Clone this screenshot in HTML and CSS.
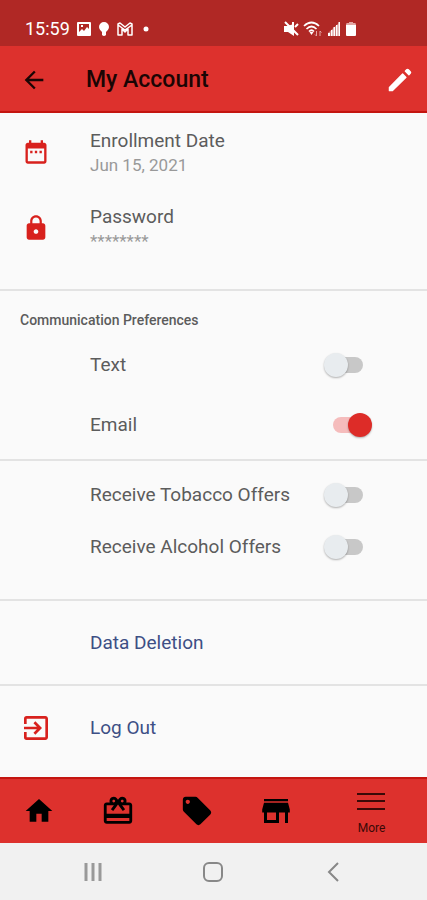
FILE: index.html
```html
<!DOCTYPE html>
<html lang="en">
<head>
    <meta charset="UTF-8">
    <meta name="viewport" content="width=device-width, initial-scale=1.0">
    <title>My Account</title>
    <link rel="stylesheet" href="styles.css">
</head>
<body>
    <div class="status-bar">
        <div class="status-left">
            <span class="time">15:59</span>
            <svg width="16" height="16" viewBox="0 0 16 16"><path fill="#fff" fill-rule="evenodd" d="M2 1h12q1 0 1 1v12q0 1-1 1H2q-1 0-1-1V2q0-1 1-1zm1 2v8l3-3 2 2 3-4 2 2V3zm2 1h2v2H5z"/></svg>
            <svg width="12" height="16" viewBox="0 0 12 16"><path fill="#fff" d="M6 1a5 5 0 0 1 5 5c0 2-2 4-3 5v3q-2 2-4 0v-3C3 10 1 8 1 6a5 5 0 0 1 5-5z"/></svg>
            <svg width="18" height="16" viewBox="0 0 18 16"><path fill="none" stroke="#fff" stroke-width="1.5" stroke-linejoin="round" d="M2 14V3l2-1 5 4 5-4 2 1v11h-4V8l-3 3-3-3v6zM2 4l7 5 7-5"/></svg>
            <svg width="12" height="16" viewBox="0 0 12 16"><circle cx="6" cy="8" r="2.5" fill="#fff"/></svg>
        </div>
        <div class="status-right">
            <svg width="16" height="16" viewBox="0 0 16 16"><path fill="#fff" d="M1 5h3l7-2v12l-6-4H1z"/><path stroke="#fff" stroke-width="2" d="M2 1l13 13M10 5V1M12 6l3-3"/></svg>
            <svg width="20" height="16" viewBox="0 0 20 16"><path fill="none" stroke="#fff" stroke-width="1.7" d="M1 5q7.500-7 15 0M3.500 8q5-5 10 0M6 10.500q2.500-2.500 5 0"/><path fill="#fff" d="M6.500 11h4l-2 3z"/><path fill="none" stroke="#e3a5a2" d="M13.500 10v5M12 13.500l1.500 1.500M17 15v-5M17 10l1.500 1.500"/></svg>
            <svg width="14" height="16" viewBox="0 0 14 16"><path fill="#fff" d="M1 12h2v3H1zM4 9h1.500v6H4zM6.500 6H8v9H6.500zM9 4h1.500v11H9zM11.500 1H13v14h-1.500z"/><path fill="#fff" opacity=".4" d="M1 15V12L13 1v14z"/></svg>
            <svg width="12" height="16" viewBox="0 0 12 16"><path fill="#fff" d="M1 4h10v10q0 1-1 1H2q-1 0-1-1z"/><path fill="#e3a5a2" d="M4 1h4v1h2q1 0 1 2H1q0-2 1-2h2z"/></svg>
        </div>
    </div>

    <header class="app-bar">
        <button class="icon-btn" type="button" aria-label="Back">
            <svg width="28" height="28" viewBox="0 0 24 24"><path fill="#1a0504" d="M20 11H7.830l5.590-5.590L12 4l-8 8 8 8 1.410-1.410L7.830 13H20v-2z"/></svg>
        </button>
        <h1>My Account</h1>
        <button class="icon-btn" type="button" aria-label="Edit">
            <svg width="30" height="30" viewBox="0 0 24 24"><path fill="#fff" stroke="#fff" stroke-linejoin="round" d="M3.500 18v2.500H6L16.800 9.900l-2.700-2.700zM20.200 6.700a1 1 0 0 0 0-1.400l-1.500-1.500a1 1 0 0 0-1.400 0l-1.100 1.100 2.900 2.900z"/></svg>
        </button>
    </header>

    <main>
        <section class="profile">
            <div class="row info">
                <svg class="row-icon" width="28" height="28" viewBox="0 0 24 24"><path d="M9 11H7v2h2v-2zm4 0h-2v2h2v-2zm4 0h-2v2h2v-2zm2-7h-1V2h-2v2H8V2H6v2H5c-1.110 0-1.990.9-1.990 2L3 20c0 1.100.89 2 2 2h14c1.100 0 2-.9 2-2V6c0-1.100-.9-2-2-2zm0 16H5V9h14v11z"/></svg>
                <div class="row-text">
                    <div class="label">Enrollment Date</div>
                    <div class="value">Jun 15, 2021</div>
                </div>
            </div>
            <div class="row info">
                <svg class="row-icon" width="28" height="28" viewBox="0 0 24 24"><path d="M18 8h-1V6c0-2.760-2.240-5-5-5S7 3.240 7 6v2H6c-1.100 0-2 .9-2 2v10c0 1.100.9 2 2 2h12c1.100 0 2-.9 2-2V10c0-1.100-.9-2-2-2zm-6 9c-1.100 0-2-.9-2-2s.9-2 2-2 2 .9 2 2-.9 2-2 2zm3.100-9H8.900V6c0-1.710 1.390-3.100 3.100-3.100s3.100 1.390 3.100 3.100v2z"/></svg>
                <div class="row-text">
                    <div class="label">Password</div>
                    <div class="value">********</div>
                </div>
            </div>
        </section>

        <section class="preferences">
            <h2>Communication Preferences</h2>
            <div class="row option">
                <label class="row-text" for="text">Text</label>
                <input type="checkbox" class="switch" id="text">
            </div>
            <div class="row option">
                <label class="row-text" for="email">Email</label>
                <input type="checkbox" class="switch" id="email" checked>
            </div>
        </section>

        <section class="offers">
            <div class="row option">
                <label class="row-text" for="tobacco">Receive Tobacco Offers</label>
                <input type="checkbox" class="switch" id="tobacco">
            </div>
            <div class="row option">
                <label class="row-text" for="alcohol">Receive Alcohol Offers</label>
                <input type="checkbox" class="switch" id="alcohol">
            </div>
        </section>

        <section>
            <a class="row action" href="#">
                <span class="row-text">Data Deletion</span>
            </a>
        </section>

        <section>
            <a class="row action" href="#">
                <svg class="row-icon" width="32" height="32" viewBox="0 0 24 24"><path d="M10.090 15.590L11.500 17l5-5-5-5-1.410 1.410L12.670 11H3v2h9.670l-2.580 2.590zM19 3H5a2 2 0 0 0-2 2v4h2V5h14v14H5v-4H3v4a2 2 0 0 0 2 2h14c1.100 0 2-.9 2-2V5c0-1.100-.9-2-2-2z"/></svg>
                <span class="row-text">Log Out</span>
            </a>
        </section>
    </main>

    <nav class="tabs">
        <a href="#" aria-label="Home">
            <svg width="32" height="32" viewBox="0 0 24 24"><path d="M10 20v-6h4v6h5v-8h3L12 3 2 12h3v8z"/></svg>
        </a>
        <a href="#" aria-label="Rewards">
            <svg width="34" height="34" viewBox="0 0 24 24"><path d="M20 6h-2.180c.11-.31.18-.65.18-1a3 3 0 0 0-5.500-1.650l-.5.670-.5-.68A3 3 0 0 0 6 5c0 .35.070.69.180 1H4c-1.110 0-1.990.89-1.990 2L2 19c0 1.110.89 2 2 2h16c1.110 0 2-.89 2-2V8c0-1.110-.89-2-2-2zm-5-2c.55 0 1 .45 1 1s-.45 1-1 1-1-.45-1-1 .45-1 1-1zM9 4c.55 0 1 .45 1 1s-.45 1-1 1-1-.45-1-1 .45-1 1-1zm11 15H4v-2h16v2zm0-5H4V8h5.080L7 10.830 8.620 12 11 8.760l1-1.360 1 1.360L15.380 12 17 10.830 14.920 8H20v6z"/></svg>
        </a>
        <a href="#" aria-label="Offers">
            <svg width="34" height="34" viewBox="0 0 24 24"><path d="M21.410 11.580l-9-9C12.050 2.220 11.550 2 11 2H4c-1.100 0-2 .9-2 2v7c0 .55.220 1.050.590 1.420l9 9c.36.36.86.58 1.410.58s1.050-.22 1.410-.59l7-7c.37-.36.59-.86.59-1.410s-.23-1.060-.59-1.420zM5.500 7C4.670 7 4 6.330 4 5.500S4.670 4 5.500 4 7 4.670 7 5.500 6.330 7 5.500 7z"/></svg>
        </a>
        <a href="#" aria-label="Stores">
            <svg width="36" height="36" viewBox="0 0 24 24"><path d="M20 4H4v1.500h16V4zm1.200 9v-2L20 6.500H4L2.800 11v2H4v7h10v-7h4v7h2v-7h1.200zM12 18H6v-5h6v5z"/></svg>
        </a>
        <a class="more" href="#">
            <svg width="28" height="20" viewBox="0 0 28 20"><path stroke="#3a0907" stroke-width="2" d="M0 3h28M0 10h28M0 18h28"/></svg>
            <span>More</span>
        </a>
    </nav>

    <div class="system-nav">
        <button type="button" aria-label="Recent apps">
            <svg width="20" height="20" viewBox="0 0 20 20"><path stroke="#999" stroke-width="3" d="M3 1v18M10 1v18M17 1v18"/></svg>
        </button>
        <button type="button" aria-label="Home screen">
            <svg width="20" height="20" viewBox="0 0 20 20"><rect x="1" y="1" width="18" height="18" rx="5" fill="none" stroke="#888" stroke-width="2"/></svg>
        </button>
        <button type="button" aria-label="Go back">
            <svg width="20" height="20" viewBox="0 0 20 20"><path fill="none" stroke="#888" stroke-width="2" d="M14 1l-9 9 9 9"/></svg>
        </button>
    </div>
</body>
</html>
```

FILE: styles.css
```css
* {
    margin: 0;
    padding: 0;
    box-sizing: border-box;
}

body {
    font-family: Roboto, 'Liberation Sans', sans-serif;
    background: #fafafa;
    color: #5c5c5c;
    min-height: 100vh;
    display: flex;
    flex-direction: column;
}

button {
    border: none;
    background: none;
    cursor: pointer;
}

a {
    text-decoration: none;
}

svg {
    display: block;
}

.status-bar {
    background: #b02825;
    color: #fff;
    height: 46px;
    padding: 12px 70px 0 25px;
    display: flex;
    align-items: center;
    justify-content: space-between;
}

.status-left {
    display: flex;
    align-items: center;
    gap: 6px;
}

.status-right {
    display: flex;
    align-items: center;
    gap: 4px;
}

.time {
    font-size: 18px;
    line-height: 20px;
}

.app-bar {
    background: #dd312d;
    height: 67px;
    border-bottom: 2px solid #c4150f;
    padding: 2px 12px 0 20px;
    display: flex;
    align-items: center;
}

.app-bar h1 {
    flex: 1;
    margin-left: 38px;
    color: #1a0504;
    font-size: 23px;
    font-weight: 500;
}

main {
    flex: 1;
}

section {
    border-bottom: 2px solid #e3e3e3;
}

section:last-child {
    border-bottom: none;
}

.row {
    display: grid;
    grid-template-columns: 36px 1fr auto;
    align-items: center;
    padding-left: 18px;
    font-size: 19px;
    line-height: 24px;
}

.row-icon {
    fill: #d8211d;
    justify-self: center;
}

.row-text {
    grid-column: 2;
    margin-left: 36px;
}

.info .row-icon {
    margin-bottom: 2px;
}

.profile {
    padding: 16px 0 36px;
    display: grid;
    gap: 28px;
}

.value {
    color: #999;
    font-size: 17px;
}

h2 {
    padding: 20px 20px 24px;
    color: #5c5c5c;
    font-size: 14px;
    font-weight: 500;
    line-height: 18px;
}

.option {
    padding-right: 55px;
}

.preferences {
    padding-bottom: 22px;
}

.preferences .option + .option {
    margin-top: 36px;
}

.offers {
    padding: 22px 0 40px;
}

.offers .option + .option {
    margin-top: 28px;
}

/* toggle switch */
.switch {
    grid-column: 3;
    appearance: none;
    position: relative;
    width: 48px;
    height: 24px;
    cursor: pointer;
}

.switch::before {
    content: '';
    position: absolute;
    top: 4px;
    left: 9px;
    width: 30px;
    height: 16px;
    border-radius: 8px;
    background: #c8c8c8;
}

.switch::after {
    content: '';
    position: absolute;
    top: 0;
    left: 0;
    width: 24px;
    height: 24px;
    border-radius: 50%;
    background: #e8ecef;
    box-shadow: 0 1px 2px rgba(0,0,0,0.3);
}

.switch:checked::before {
    background: #f5bcbc;
}

.switch:checked::after {
    left: 24px;
    background: #dd2c28;
}

.action {
    height: 83px;
    color: #3d4f85;
}

.tabs {
    background: #dd312d;
    height: 66px;
    border-top: 2px solid #c4150f;
    display: grid;
    grid-template-columns: repeat(4, 1fr) 26%;
}

.tabs a {
    display: flex;
    flex-direction: column;
    align-items: center;
    justify-content: center;
    color: #3a0907;
    font-size: 12px;
}

.tabs .more {
    gap: 10px;
    padding-top: 4px;
}

.system-nav {
    background: #f1f1f1;
    height: 57px;
    padding: 0 33px;
    display: grid;
    grid-template-columns: repeat(3, 1fr);
}

.system-nav button {
    display: flex;
    align-items: center;
    justify-content: center;
}
```
